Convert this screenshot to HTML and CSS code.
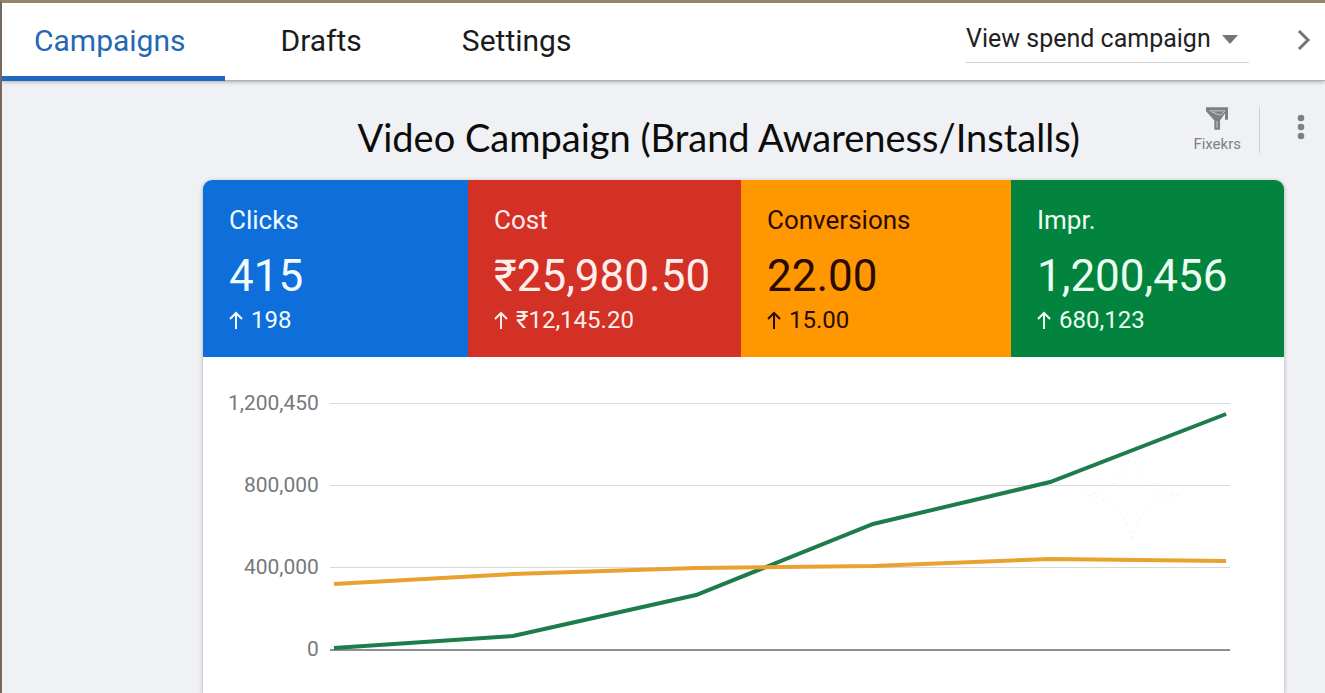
FILE: index.html
```html
<!DOCTYPE html>
<html lang="en">
<head>
  <meta charset="UTF-8" />
  <meta name="viewport" content="width=device-width, initial-scale=1" />
  <title>Video Campaign</title>
  <link rel="stylesheet" href="styles.css">
</head>
<body>

  <header class="topbar">
    <nav class="tabs">
      <a class="tab active" href="#campaigns">Campaigns</a>
      <a class="tab" href="#drafts">Drafts</a>
      <a class="tab" href="#settings">Settings</a>
    </nav>
    <div class="view-select">
      <select aria-label="View">
        <option>View spend campaign</option>
      </select>
      <svg class="caret" viewBox="0 0 16 9"><path d="M0 0h16L8 9z" /></svg>
    </div>
    <button class="next" aria-label="Next">
      <svg viewBox="0 0 14 22"><path d="M2 2l9 9-9 9" /></svg>
    </button>
  </header>

  <div class="title-row">
    <h1>Video Campaign (Brand Awareness/Installs)</h1>
    <button class="filter">
      <svg viewBox="0 0 66 68">
        <path class="solid" d="M0 0H66V38H57V18L42 40V68H25V40L0 12Z" />
        <path class="cut" d="M11 11H57L43 24L31 20L17 14M33 42V62" />
      </svg>
      <span>Fixekrs</span>
    </button>
    <button class="more" aria-label="More options">
      <svg viewBox="0 0 8 26">
        <circle cx="4" cy="4" r="3.3" />
        <circle cx="4" cy="13" r="3.3" />
        <circle cx="4" cy="22" r="3.3" />
      </svg>
    </button>
  </div>

  <main class="panel">
    <div class="cards">
      <section class="card blue">
        <h2>Clicks</h2>
        <p class="value">415</p>
        <p class="delta"><svg viewBox="0 0 14 18"><path d="M7 18V2M1 8l6-6 6 6" /></svg>198</p>
      </section>
      <section class="card red">
        <h2>Cost</h2>
        <p class="value">₹25,980.50</p>
        <p class="delta"><svg viewBox="0 0 14 18"><path d="M7 18V2M1 8l6-6 6 6" /></svg>₹12,145.20</p>
      </section>
      <section class="card orange">
        <h2>Conversions</h2>
        <p class="value">22.00</p>
        <p class="delta"><svg viewBox="0 0 14 18"><path d="M7 18V2M1 8l6-6 6 6" /></svg>15.00</p>
      </section>
      <section class="card green">
        <h2>Impr.</h2>
        <p class="value">1,200,456</p>
        <p class="delta"><svg viewBox="0 0 14 18"><path d="M7 18V2M1 8l6-6 6 6" /></svg>680,123</p>
      </section>
    </div>

    <div class="chart">
      <div class="axis">
        <span>1,200,450</span>
        <span>800,000</span>
        <span>400,000</span>
        <span>0</span>
      </div>
      <svg class="plot" viewBox="0 0 900 250" preserveAspectRatio="none">
        <path class="grid" d="M0 1.5H900M0 83.5H900M0 165.5H900" />
        <path class="base" d="M0 248H900" />
        <path class="spark" d="M802 46Q808 87 849 93Q808 99 802 140Q796 99 755 93Q796 87 802 46Z" />
        <polyline class="line impr" points="4,246 183,234 366,193 543,122 720,80 896,12" />
        <polyline class="line conv" points="4,182 183,172 366,166 543,164 720,157 896,159" />
      </svg>
    </div>
  </main>

</body>
</html>
```
FILE: styles.css
```css
* {
  box-sizing: border-box;
}

body {
  margin: 0;
  min-height: 100vh;
  display: flex;
  flex-direction: column;
  font-family: Roboto, "Liberation Sans", sans-serif;
  background: #eff1f4;
  border-top: 3px solid #97846c;
  border-left: 2px solid #75695f;
}

h1, h2, p {
  margin: 0;
  font-weight: 400;
}

button {
  padding: 0;
  border: none;
  background: none;
  font-family: inherit;
  cursor: pointer;
}

/* Top bar */
.topbar {
  display: flex;
  align-items: center;
  height: 78px;
  padding: 0 14px 4px 0;
  background: #fff;
  border-bottom: 1px solid #b0b3b6;
  box-shadow: 0 1px 4px rgba(0, 0, 0, 0.3);
}

.tabs {
  display: flex;
  align-self: flex-start;
  margin-right: auto;
}

.tab {
  height: 78px;
  padding: 0 50px;
  font-size: 30px;
  line-height: 76px;
  color: #1b1b1b;
  text-decoration: none;
}

.tab.active {
  padding: 0 39px 0 32px;
  margin-right: 6px;
  color: #2468b4;
  border-bottom: 5px solid #1f67c0;
}

.view-select {
  position: relative;
  width: 283px;
  margin-right: 48px;
}

.view-select select {
  display: block;
  width: 100%;
  height: 46px;
  padding: 0 0 2px;
  border: none;
  border-bottom: 1px solid #d0d0d0;
  appearance: none;
  background: none;
  font-family: inherit;
  font-size: 25px;
  color: #222;
}

.caret {
  position: absolute;
  right: 11px;
  top: 18px;
  width: 16px;
  height: 9px;
  fill: #757575;
  pointer-events: none;
}

.next svg {
  display: block;
  width: 14px;
  height: 22px;
  fill: none;
  stroke: #757575;
  stroke-width: 3;
}

/* Title and tools */
.title-row {
  display: flex;
  align-items: center;
  height: 99px;
  padding: 0 20px 2px 0;
}

h1 {
  flex: 1;
  padding: 14px 0 0 242px;
  font-family: Lato, "Open Sans", sans-serif;
  font-size: 38px;
  line-height: 48px;
  text-align: center;
  color: #0c0c0c;
}

.filter {
  display: flex;
  flex-direction: column;
  align-items: center;
  gap: 4px;
  height: 46px;
  padding-right: 18px;
  border-right: 1px solid #cfd1d4;
  font-size: 15px;
  line-height: 20px;
  color: #7d7f82;
}

.filter svg {
  width: 22px;
  height: 23px;
  flex: none;
}

.filter .solid {
  fill: #7d7f82;
}

.filter .cut {
  fill: none;
  stroke: #c9cbce;
  stroke-width: 3;
}

.more {
  margin-left: 37px;
  padding-bottom: 6px;
}

.more svg {
  display: block;
  width: 8px;
  height: 26px;
  fill: #7d7f82;
}

/* Metrics panel */
.panel {
  flex: 1;
  margin: 0 41px 0 201px;
  background: #fff;
  border-radius: 9px 9px 0 0;
  box-shadow: 0 1px 4px rgba(0, 0, 0, 0.3);
}

.cards {
  display: grid;
  grid-template-columns: 265fr 273fr 270fr 273fr;
  border-radius: 9px 9px 0 0;
  overflow: hidden;
}

.card {
  padding: 24px 0 22px 26px;
  color: #f2fbff;
}

.card h2 {
  font-size: 26px;
  line-height: 32px;
}

.value {
  margin-top: 14px;
  font-size: 44px;
  line-height: 52px;
}

.delta {
  display: flex;
  align-items: center;
  gap: 8px;
  margin-top: 3px;
  font-size: 24px;
  line-height: 30px;
}

.delta svg {
  width: 14px;
  height: 18px;
  fill: none;
  stroke: currentColor;
  stroke-width: 2;
}

.blue { background: #0e6fdb; }
.red { background: #d33026; color: #ffeeec; }
.orange { background: #ff9800; color: #2a0a04; }
.green { background: #03843e; color: #eafff2; }

/* Chart */
.chart {
  display: flex;
  gap: 11px;
  padding: 34px 54px 30px 25px;
}

.axis {
  display: flex;
  flex-direction: column;
  justify-content: space-between;
  height: 270px;
  font-size: 21px;
  line-height: 24px;
  text-align: right;
  color: #77787a;
}

.plot {
  flex: 1;
  min-width: 0;
  height: 250px;
  margin-top: 11px;
}

.plot path,
.plot polyline {
  fill: none;
  vector-effect: non-scaling-stroke;
}

.grid { stroke: #d9d9d9; }
.base { stroke: #8f8f8f; stroke-width: 2; }
.plot .spark { stroke: #f3f3f3; stroke-dasharray: 3 4; }
.line { stroke-width: 4; }
.impr { stroke: #1c7c4a; }
.conv { stroke: #e9a22f; }
```
